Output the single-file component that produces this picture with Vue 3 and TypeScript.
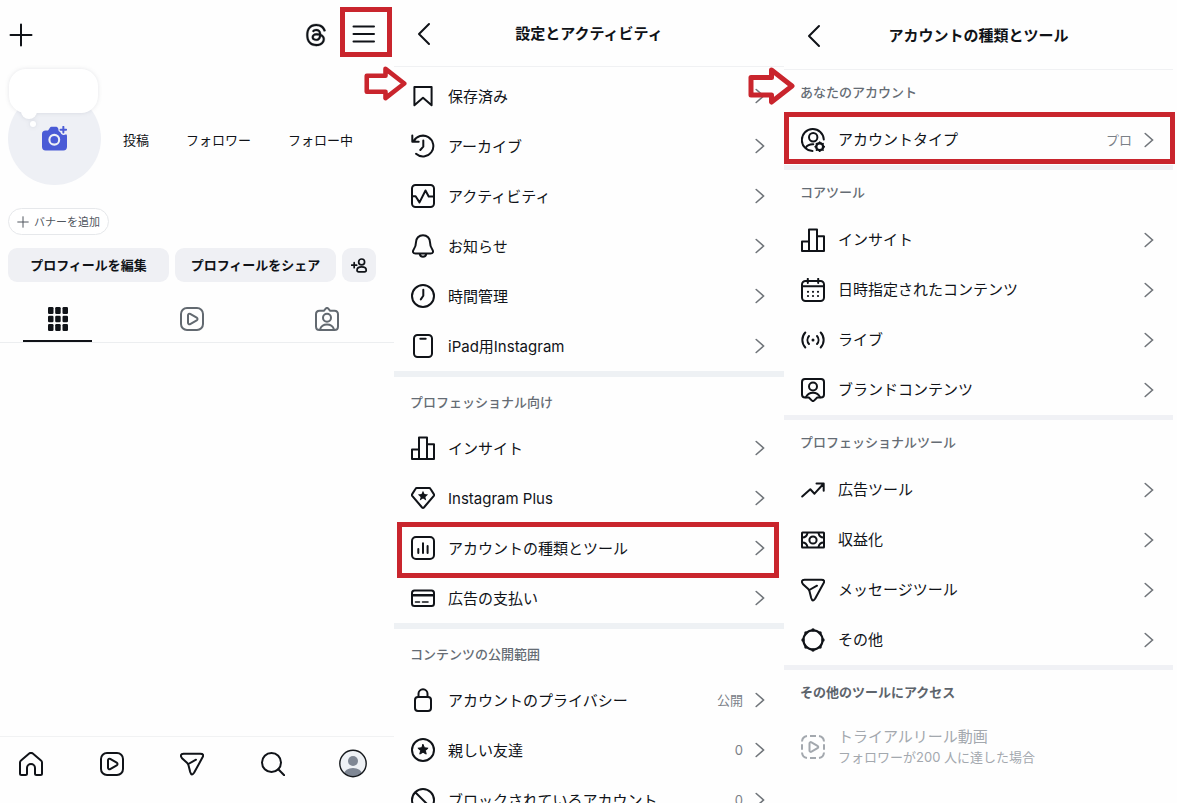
<script setup lang="ts">
interface Row {
  icon: string
  label: string
  value?: string
  marked?: boolean
}
interface Section {
  title?: string
  rows: Row[]
}

const star = 'l1.5 3.3 3.6.4-2.7 2.4.8 3.5-3.2-1.8-3.2 1.8.8-3.5-2.7-2.4 3.6-.4z'

// Inner markup of the 24x24 line icons
const icons: Record<string, string> = {
  plus: '<path d="M12 1.5v21M1.5 12h21"/>',
  menu: '<path d="M1.500 4.500h20.500M1.500 12h20.500M1.500 19.500h20.500"/>',
  threads:
    '<path class="solid" stroke-width=".3" d="M12.186 24h-.007c-3.581-.024-6.334-1.205-8.184-3.509C2.35 18.44 1.5 15.586 1.472 12.01v-.017c.03-3.579.879-6.43 2.525-8.482C5.845 1.205 8.6.024 12.18 0h.014c2.746.02 5.043.725 6.826 2.098 1.677 1.29 2.858 3.13 3.509 5.467l-2.04.569c-1.104-3.96-3.898-5.984-8.304-6.015-2.91.022-5.11.936-6.54 2.717C4.307 6.504 3.616 8.914 3.589 12c.027 3.086.718 5.496 2.057 7.164 1.43 1.783 3.631 2.698 6.54 2.717 2.623-.02 4.358-.631 5.8-2.045 1.647-1.613 1.618-3.593 1.09-4.798-.31-.71-.873-1.3-1.634-1.75-.192 1.352-.622 2.446-1.284 3.272-.886 1.102-2.14 1.704-3.73 1.79-1.202.065-2.361-.218-3.259-.801-1.063-.689-1.685-1.74-1.752-2.964-.065-1.19.408-2.285 1.33-3.082.88-.76 2.119-1.207 3.583-1.291a13.853 13.853 0 0 1 3.02.142c-.126-.742-.375-1.332-.75-1.757-.513-.586-1.308-.883-2.359-.89h-.029c-.844 0-1.992.232-2.721 1.32L7.734 7.847c.98-1.454 2.568-2.256 4.478-2.256h.044c3.194.02 5.097 1.975 5.287 5.388.108.046.216.094.321.142 1.49.7 2.58 1.761 3.154 3.07.797 1.82.871 4.79-1.548 7.158-1.85 1.81-4.094 2.628-7.277 2.65Zm1.003-11.69c-.242 0-.487.007-.739.021-1.836.103-2.98.946-2.916 2.143.067 1.256 1.452 1.839 2.784 1.767 1.224-.065 2.818-.543 3.086-3.71a10.5 10.5 0 0 0-2.215-.221z"/>',
  camera:
    '<path class="solid" stroke="none" d="M3.500 4.200h2.300L7.600 1.600Q8.100.8 9 .8h4.600q1 0 1.500.8l.5.9q-.3 2.600 2 3.600.5 2.200 2.600 2.500 1.600.2 3-.7.8.6.8 1.600V20q0 3.500-3.500 3.500h-17Q0 23.500 0 20V7.700q0-3.500 3.500-3.500z"/><circle cx="11.800" cy="13.200" r="4.700" stroke="#eef0f6" stroke-width="2"/><path d="M20.500.8v5.400M17.800 3.500h5.400" stroke-width="1.900"/>',
  addPerson:
    '<circle cx="15" cy="7" r="4.200"/><path d="M15 14c-4 0-6.500 2-6.500 4.700 0 1.700 1 2.300 2.500 2.300h8c1.500 0 2.500-.6 2.500-2.300C21.500 16 19 14 15 14zM4.500 8v7M1 11.500h7"/>',
  grid:
    '<g class="solid" stroke="none"><rect x="2" y="0" width="5.500" height="7" rx="1.200"/><rect x="9.200" y="0" width="5.500" height="7" rx="1.200"/><rect x="16.500" y="0" width="5.500" height="7" rx="1.200"/><rect x="2" y="8.700" width="5.500" height="6.600" rx="1.200"/><rect x="9.200" y="8.700" width="5.500" height="6.600" rx="1.200"/><rect x="16.500" y="8.700" width="5.500" height="6.600" rx="1.200"/><rect x="2" y="17" width="5.500" height="7" rx="1.200"/><rect x="9.200" y="17" width="5.500" height="7" rx="1.200"/><rect x="16.500" y="17" width="5.500" height="7" rx="1.200"/></g>',
  reels:
    '<rect x="1" y="1" width="22" height="22" rx="6"/><path d="M8 8.200v7.600c0 1.300 1.200 1.900 2.200 1.300l6.500-3.800c1.100-.7 1.100-1.900 0-2.600l-6.500-3.800C9.200 6.300 8 6.900 8 8.200z"/>',
  tagged:
    '<path d="M4.500 3.800h4.300L10.700 1.600q1.300-1.300 2.600 0l1.900 2.200h4.300Q23 3.800 23 7.300V19.500Q23 23 19.500 23h-15Q1 23 1 19.500V7.300Q1 3.800 4.500 3.800z"/><circle cx="12" cy="10.800" r="4"/><path d="M5 22.500c1-3.200 3.500-4.900 7-4.900s6 1.700 7 4.900"/>',
  home:
    '<path d="M1 10.500Q1 9.300 2 8.500L10.200 1.600q1.800-1.500 3.600 0L22 8.500q1 .8 1 2V21.500Q23 23 21.500 23H17.500Q16 23 16 21.500V16a4 4 0 0 0-8 0v5.500Q8 23 6.500 23H2.500Q1 23 1 21.500z"/>',
  send:
    '<path d="M3.600 1.800H20.400Q24.600 1.800 22.400 5.600L14.200 20.600Q11.700 24.800 10.200 20L8.500 13.300Q8.100 11.800 7 10.800L2 6.200Q-.9 2.200 3.600 1.800zM8.300 12l7.700-4.300"/>',
  search: '<circle cx="10.500" cy="10.500" r="9.500"/><path d="M17.300 17.300 23.200 23.200"/>',
  saved: '<path d="M3.400 3h17.200v18.300L12 13.700l-8.600 7.600z"/>',
  archive:
    '<path d="M2.600 7.500A10.400 10.400 0 1 1 5 19.800M1.300 1.500v6.300h6.400M12.300 6.500v6.200l-3 3.300"/>',
  activity:
    '<rect x="1" y="1" width="22" height="22" rx="3.500"/><path d="M1 12.200h3.600l3.900 6.200 6-11.900 3.200 6H23"/>',
  bell:
    '<path d="M12 1.200c-4.200 0-7 3.200-7 7 0 3.600-1 5.400-2.300 7.300C1.300 17.700 2 19.500 4.500 19.500h15c2.500 0 3.200-1.800 1.800-4C20 13.600 19 11.800 19 8.200c0-3.800-2.800-7-7-7zM8.800 20.300q.6 2.500 3.200 2.500t3.200-2.500"/>',
  clock: '<circle cx="12" cy="12" r="11"/><path d="M12.300 5.800v6l-2.500 3.600"/>',
  tablet: '<rect x="3" y="1" width="18" height="22" rx="3.500"/><path d="M9.300 4.800h5.400"/>',
  insight: '<path d="M1 13.500h7V23H1zM8 1.500h8V23H8zM16 8.200h7V23h-7z"/>',
  gem:
    `<path d="M5.800 2h12.400q.8 0 1.200.7L23 8.400q.4.6 0 1.200L12.900 21.500q-.9 1-1.800 0L1 9.600Q.6 9 1 8.400l3.600-5.700Q5 2 5.800 2z"/><path class="solid" stroke="none" d="M12 4.800${star}"/>`,
  chart:
    '<rect x="1" y="1" width="22" height="22" rx="4"/><path d="M7.300 13v4M12 7.200V17M16.600 10v7"/>',
  card:
    '<rect x="1" y="4.500" width="22" height="15.500" rx="2.500"/><path d="M1 9.300h22" stroke-width="2.600"/><path d="M4.500 16h4M11.500 16H17" stroke-width="1.600"/>',
  lock:
    '<rect x="4" y="9" width="16" height="14" rx="3"/><path d="M7.500 9V5.800a4.500 4.500 0 0 1 9 0V9"/>',
  closeFriends: `<circle cx="12" cy="12" r="11"/><path class="solid" stroke-width="1" d="M12 6.500${star}"/>`,
  block: '<circle cx="12" cy="12" r="11"/><path d="M4.500 4.500l15 15"/>',
  accountType:
    '<path d="M22.800 11.500A11 11 0 1 0 11.500 23"/><circle cx="12.200" cy="9.300" r="4.200"/><path d="M4.800 19.500c1.500-2.200 4-3.500 7.500-3.300"/><circle cx="18.700" cy="18.800" r="3.500" stroke-width="2.400"/><path stroke-width="1.500" d="M18.700 14v.5M18.700 23v.5M14 18.800h.5M23 18.800h.5M15.400 15.500l.4.400M21.700 21.700l.4.400M15.400 22.100l.4-.4M21.700 15.900l.4-.4"/>',
  calendar:
    '<rect x="1" y="3" width="22" height="20" rx="3.500"/><path d="M6.800.8V5M17.200.8V5M1 8.300h22"/><path d="M7 13.800h.01M12 13.800h.01M17 13.800h.01M7 18h.01M12 18h.01M17 18h.01" stroke-width="2.200"/>',
  live:
    '<path d="M4.300 4.500a11 11 0 0 0 0 15M19.700 4.500a11 11 0 0 1 0 15M8 8a6 6 0 0 0 0 8M16 8a6 6 0 0 1 0 8"/><path d="M12 12h.01" stroke-width="3"/>',
  brand:
    '<path d="M4 1h16q3 0 3 3v12.500q0 3-3 3h-3.800L13.300 22.400q-1.300 1.300-2.600 0L7.800 19.500H4q-3 0-3-3V4Q1 1 4 1z"/><circle cx="12" cy="8.500" r="4"/><path d="M4.800 19.300c1.400-3 4-4.600 7.200-4.600s5.800 1.600 7.200 4.600"/>',
  trend: '<path d="M1.200 18.500 9.300 11.200l4.200 4.500L22.300 6M15.500 5.500h7.200v7.200"/>',
  money:
    '<rect x="1" y="4.500" width="22" height="15" rx=".5"/><circle cx="12" cy="12" r="3.600"/><path d="M1.500 9.500Q5.500 9.500 6.500 5M17.500 5q1 4.500 5 4.500M1.500 14.500q4 0 5 4.500M17.500 19q1-4.500 5-4.500"/>',
  other:
    '<circle cx="12" cy="12" r="9.600" stroke-width="2.200"/><path stroke-width="3.400" d="M12 2h.01M19.100 4.900h.01M22 12h.01M19.100 19.100h.01M12 22h.01M4.900 19.100h.01M2 12h.01M4.900 4.900h.01"/>',
  trial:
    '<path stroke-linecap="butt" d="M1 6.500Q1.400 1.600 6 1M9 1h6M18 1q4.600.6 5 5.500M23 9.300v5.400M23 17.500q-.4 4.900-5 5.500M15 23H9M6 23q-4.600-.6-5-5.500M1 14.700V9.300"/><path d="M8.500 8.500v7c0 1.200 1.100 1.700 2 1.200l6-3.500c1-.6 1-1.800 0-2.400l-6-3.500c-.9-.5-2 0-2 1.200z"/>',
}

const stats = ['投稿', 'フォロワー', 'フォロー中']
const tabs = [
  { icon: 'grid', name: '投稿' },
  { icon: 'reels', name: 'リール' },
  { icon: 'tagged', name: 'タグ付け' },
]
const nav = [
  { icon: 'home', name: 'ホーム' },
  { icon: 'reels', name: 'リール' },
  { icon: 'send', name: 'メッセージ' },
  { icon: 'search', name: '検索' },
]

const settings: Section[] = [
  {
    rows: [
      { icon: 'saved', label: '保存済み' },
      { icon: 'archive', label: 'アーカイブ' },
      { icon: 'activity', label: 'アクティビティ' },
      { icon: 'bell', label: 'お知らせ' },
      { icon: 'clock', label: '時間管理' },
      { icon: 'tablet', label: 'iPad用Instagram' },
    ],
  },
  {
    title: 'プロフェッショナル向け',
    rows: [
      { icon: 'insight', label: 'インサイト' },
      { icon: 'gem', label: 'Instagram Plus' },
      { icon: 'chart', label: 'アカウントの種類とツール', marked: true },
      { icon: 'card', label: '広告の支払い' },
    ],
  },
  {
    title: 'コンテンツの公開範囲',
    rows: [
      { icon: 'lock', label: 'アカウントのプライバシー', value: '公開' },
      { icon: 'closeFriends', label: '親しい友達', value: '0' },
      { icon: 'block', label: 'ブロックされているアカウント', value: '0' },
    ],
  },
]

const tools: Section[] = [
  {
    title: 'あなたのアカウント',
    rows: [{ icon: 'accountType', label: 'アカウントタイプ', value: 'プロ', marked: true }],
  },
  {
    title: 'コアツール',
    rows: [
      { icon: 'insight', label: 'インサイト' },
      { icon: 'calendar', label: '日時指定されたコンテンツ' },
      { icon: 'live', label: 'ライブ' },
      { icon: 'brand', label: 'ブランドコンテンツ' },
    ],
  },
  {
    title: 'プロフェッショナルツール',
    rows: [
      { icon: 'trend', label: '広告ツール' },
      { icon: 'money', label: '収益化' },
      { icon: 'send', label: 'メッセージツール' },
      { icon: 'other', label: 'その他' },
    ],
  },
]

const screens = [
  { key: 'settings', title: '設定とアクティビティ', sections: settings },
  { key: 'tools', title: 'アカウントの種類とツール', sections: tools },
]
</script>

<template>
  <main class="page">
    <section class="screen profile">
      <header class="topbar">
        <button class="bare" aria-label="作成">
          <svg class="icon" viewBox="0 0 24 24" v-html="icons.plus" />
        </button>
        <div class="topbar-right">
          <button class="bare" aria-label="Threads">
            <svg class="icon" viewBox="-1 -1 26 26" v-html="icons.threads" />
          </button>
          <button class="bare menu" aria-label="メニュー">
            <svg class="icon" viewBox="0 0 24 24" v-html="icons.menu" />
          </button>
        </div>
      </header>

      <div class="summary">
        <button class="avatar" aria-label="プロフィール写真を追加">
          <span class="note"></span>
          <svg class="icon camera" viewBox="0 0 24 24" v-html="icons.camera" />
        </button>
        <a v-for="s in stats" :key="s" class="stat" href="#">{{ s }}</a>
      </div>

      <button class="banner">
        <svg class="icon small" viewBox="0 0 24 24" v-html="icons.plus" />バナーを追加
      </button>

      <div class="actions">
        <button class="action">プロフィールを編集</button>
        <button class="action">プロフィールをシェア</button>
        <button class="action square" aria-label="友達を見つける">
          <svg class="icon add" viewBox="0 0 24 24" v-html="icons.addPerson" />
        </button>
      </div>

      <nav class="tabs">
        <button
          v-for="(t, i) in tabs"
          :key="t.icon"
          class="tab"
          :class="{ active: i === 0 }"
          :aria-label="t.name"
        >
          <svg class="icon" viewBox="0 0 24 24" v-html="icons[t.icon]" />
        </button>
      </nav>

      <nav class="bottom">
        <button v-for="n in nav" :key="n.icon" class="bare slot" :aria-label="n.name">
          <svg class="icon" viewBox="0 0 24 24" v-html="icons[n.icon]" />
        </button>
        <button class="bare slot" aria-label="プロフィール">
          <svg class="me" viewBox="0 0 28 28">
            <defs>
              <clipPath id="me-clip"><circle cx="14" cy="14" r="13" /></clipPath>
            </defs>
            <circle cx="14" cy="14" r="13" fill="#eef1f5" />
            <g clip-path="url(#me-clip)" fill="#7f8794">
              <circle cx="14" cy="11.500" r="5" />
              <ellipse cx="14" cy="24.500" rx="9" ry="6" />
            </g>
            <circle cx="14" cy="14" r="13.200" fill="none" stroke="#15181c" stroke-width="1.400" />
          </svg>
        </button>
      </nav>
    </section>

    <section v-for="s in screens" :key="s.key" class="screen" :class="s.key">
      <header class="titlebar">
        <button class="bare back" aria-label="戻る">
          <svg class="back-icon" viewBox="0 0 14 24"><path d="M12 2 2 12l10 10" /></svg>
        </button>
        <h1>{{ s.title }}</h1>
      </header>

      <div class="list">
        <section v-for="(sec, i) in s.sections" :key="i" class="group">
          <h2 v-if="sec.title">{{ sec.title }}</h2>
          <a v-for="r in sec.rows" :key="r.label" class="row" href="#">
            <svg class="icon" viewBox="0 0 24 24" v-html="icons[r.icon]" />
            <span class="label">{{ r.label }}</span>
            <span v-if="r.value" class="value">{{ r.value }}</span>
            <svg class="chevron" viewBox="0 0 10 16"><path d="M1.200 1.500 8.500 8l-7.300 6.500" /></svg>
            <span v-if="r.marked" class="mark"></span>
          </a>
        </section>
        <section v-if="s.key === 'tools'" class="group">
          <h2 class="strong">その他のツールにアクセス</h2>
          <div class="row locked">
            <svg class="icon" viewBox="0 0 24 24" v-html="icons.trial" />
            <div class="label">
              <div>トライアルリール動画</div>
              <div class="hint">フォロワーが200 人に達した場合</div>
            </div>
          </div>
        </section>
      </div>

      <svg class="arrow" viewBox="0 0 47 38">
        <path d="M3 10.500h20.500V3L44 19 23.500 35V28H3z" />
      </svg>
    </section>
  </main>
</template>

<style>
body {
  background: #fefefe;
}
</style>

<style scoped>
.page {
  display: grid;
  grid-template-columns: 394fr 390fr 393fr;
  height: 100vh;
  overflow: hidden;
  background: #fefefe;
  color: #101318;
  font-family: Inter, 'Noto Sans CJK JP', sans-serif;
  font-size: 15px;
  line-height: 20px;
}
.page * {
  box-sizing: border-box;
}
button {
  padding: 0;
  border: 0;
  background: none;
  color: inherit;
  font: inherit;
  cursor: pointer;
}
a {
  color: inherit;
  text-decoration: none;
}
.bare {
  display: flex;
  align-items: center;
  justify-content: center;
}
.icon {
  display: block;
  flex: none;
  width: 24px;
  height: 24px;
  fill: none;
  stroke: currentColor;
  stroke-width: 2;
  stroke-linecap: round;
  stroke-linejoin: round;
}
.icon :deep(.solid) {
  fill: currentColor;
}
.screen {
  position: relative;
  display: flex;
  flex-direction: column;
  min-width: 0;
  min-height: 0;
}

/* Profile */
.topbar {
  display: flex;
  align-items: flex-start;
  justify-content: space-between;
  height: 69px;
  padding: 7px 2px 0 9px;
}
.topbar .bare {
  height: 55px;
}
.topbar-right {
  display: flex;
  gap: 12px;
}
.topbar .menu {
  width: 52px;
  height: 50px;
  padding: 4px 4px 0 0;
  border: 5px solid #c9252d;
}
.summary {
  display: flex;
  align-items: flex-end;
  height: 116px;
  padding-left: 8px;
  font-size: 13px;
}
.avatar {
  position: relative;
  flex: none;
  display: flex;
  align-items: center;
  justify-content: center;
  width: 93px;
  height: 93px;
  border-radius: 50%;
  background: #eef0f5;
}
.camera {
  color: #4a5bd6;
  width: 25px;
  height: 25px;
}
.note {
  position: absolute;
  top: -23px;
  left: 1px;
  width: 89px;
  height: 44px;
  border-radius: 17px;
  background: #fff;
  filter: drop-shadow(0 0 2px rgba(40, 50, 70, 0.12));
}
.note::before,
.note::after {
  content: '';
  position: absolute;
  border-radius: 50%;
  background: #fff;
}
.note::before {
  left: 12px;
  bottom: -6px;
  width: 16px;
  height: 16px;
}
.note::after {
  left: 21px;
  bottom: -14px;
  width: 6px;
  height: 6px;
}
.stat {
  display: flex;
  align-items: center;
  height: 90px;
  margin-left: 37px;
}
.stat:nth-child(2) {
  margin-left: 22px;
}
.banner {
  display: flex;
  align-items: center;
  align-self: flex-start;
  gap: 5px;
  height: 27px;
  margin: 23px 0 13px 8px;
  padding: 0 8px;
  border: 1px solid #e6e8eb;
  border-radius: 14px;
  background: #fff;
  color: #50565e;
  font-size: 11px;
}
.small {
  width: 12px;
  height: 12px;
}
.actions {
  display: flex;
  gap: 6px;
  padding: 0 18px 0 8px;
}
.action {
  flex: 1;
  height: 34px;
  border-radius: 9px;
  background: #eff0f4;
  font-size: 13px;
  font-weight: 600;
  white-space: nowrap;
}
.square {
  display: flex;
  align-items: center;
  justify-content: center;
  flex: 0 0 34px;
}
.add {
  width: 17px;
  height: 17px;
  stroke-width: 2.4;
}
.tabs {
  display: flex;
  justify-content: space-between;
  height: 61px;
  padding: 14px 33px 0 23px;
  border-bottom: 1px solid #eceef0;
}
.tab {
  display: flex;
  align-items: center;
  justify-content: center;
  width: 69px;
  padding-top: 2px;
  border-bottom: 2px solid transparent;
  color: #626970;
}
.tab.active {
  border-color: #101318;
  color: #101318;
}
.bottom {
  display: flex;
  justify-content: space-between;
  margin-top: auto;
  padding: 12px 27px 25px 17px;
  border-top: 1px solid #f1f2f3;
}
.slot {
  width: 28px;
  height: 29px;
}
.me {
  display: block;
  width: 29px;
  height: 29px;
}

/* Menu screens */
.titlebar {
  display: grid;
  grid-template-columns: 54px 1fr 54px;
  align-items: center;
  flex: none;
  height: 67px;
  padding-top: 2px;
  border-bottom: 1px solid #f0f1f3;
}
.back {
  justify-content: flex-start;
  padding-left: 23px;
}
.back-icon {
  display: block;
  width: 14px;
  height: 24px;
  fill: none;
  stroke: #101318;
  stroke-width: 2;
  stroke-linecap: round;
  stroke-linejoin: round;
}
h1 {
  margin: 0;
  font-size: 15px;
  line-height: 20px;
  font-weight: 600;
  text-align: center;
}
.list {
  flex: 1;
  min-height: 0;
  overflow-y: auto;
  scrollbar-width: none;
}
.settings .list {
  padding-top: 4px;
}
.group + .group {
  border-top: 6px solid #eef1f4;
}
h2 {
  display: flex;
  align-items: center;
  height: 46px;
  margin: 0;
  padding: 4px 16px 0;
  color: #656c74;
  font-size: 13px;
  line-height: 20px;
  font-weight: 500;
}
.row {
  position: relative;
  display: flex;
  align-items: center;
  height: 50px;
  padding: 0 19px 0 17px;
}
.label {
  flex: 1;
  margin-left: 13px;
  white-space: nowrap;
}
.settings .label {
  padding-top: 1px;
}
.value {
  color: #7a8087;
  font-size: 13px;
}
.chevron {
  flex: none;
  width: 10px;
  height: 16px;
  margin-left: 12px;
  fill: none;
  stroke: #70757a;
  stroke-width: 1.6;
  stroke-linecap: round;
}
.mark {
  position: absolute;
  inset: -1px 5px -5px 3px;
  border: 5px solid #c9252d;
}
.arrow {
  position: absolute;
  z-index: 2;
  fill: none;
  stroke: #c9252d;
  stroke-width: 5;
  stroke-linejoin: round;
}
.settings .arrow {
  top: 66px;
  left: -30px;
  width: 43px;
  height: 35px;
}
.tools .arrow {
  top: 67px;
  left: -36px;
  width: 47px;
  height: 38px;
}
.tools .titlebar,
.tools .group {
  margin-right: 4px;
}
.tools .titlebar {
  height: 70px;
  padding-top: 3px;
}
.tools .group + .group {
  border-top: 5px solid #f0f1f5;
}
.tools h2 {
  height: 45px;
  padding: 0 16px 2px;
}
.tools .mark {
  inset: -3px -2px 1px 0;
}
.tools h2.strong {
  font-weight: 600;
  color: #5d646c;
}
.tools .locked {
  height: 64px;
  color: #a3a8ae;
}
.hint {
  font-size: 13px;
}
</style>
